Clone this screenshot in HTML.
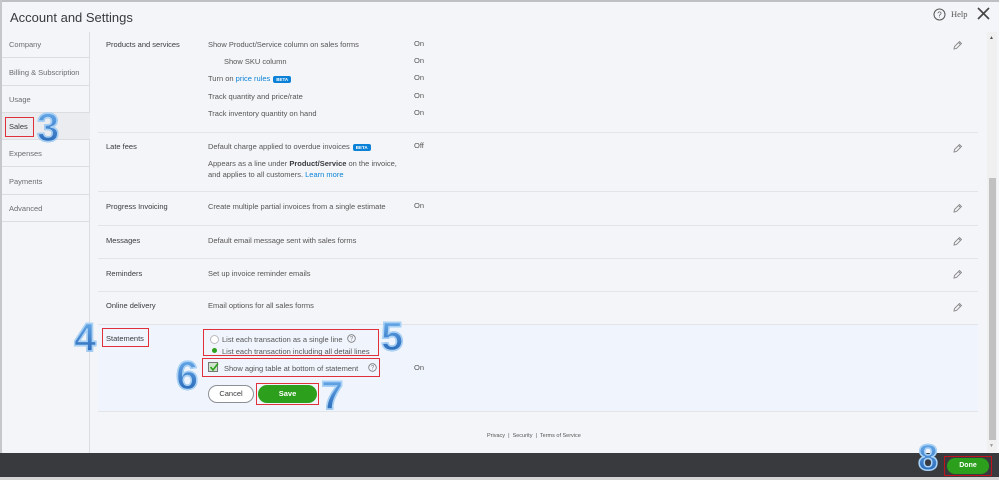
<!DOCTYPE html>
<html><head><meta charset="utf-8"><style>
*{margin:0;padding:0;box-sizing:border-box}
body{width:999px;height:480px;overflow:hidden;background:#f4f5f8;font-family:"Liberation Sans",sans-serif;color:#393a3d;position:relative}
.a{position:absolute;white-space:nowrap}
.s{font-size:7.5px;color:#555}
.lbl{font-size:7.5px;color:#393a3d}
.side{position:absolute;left:2px;width:88px;height:27px;border-bottom:1px solid #dcdde0;font-size:7.5px;color:#6b6c72;padding:9px 0 0 7px}
.sep{position:absolute;left:98px;width:880px;height:1px;background:#e3e4e8}
.beta{display:inline-block;background:#0b82d8;color:#fff;font-size:4.5px;font-weight:bold;padding:1px 3px;border-radius:2px;vertical-align:middle;margin-left:3px}
.link{color:#0b82d8}
.pen{position:absolute;left:952px;width:10px;height:10px}
.red{position:absolute;border:1px solid #e0303a}
.num{position:absolute;font-weight:bold;font-size:40px;color:#3a7fd0;-webkit-text-stroke:1.5px #a9d2f5;font-family:"Liberation Sans",sans-serif;line-height:1;background:linear-gradient(#6fb0ef,#1f5fb0);-webkit-background-clip:text;-webkit-text-fill-color:transparent}
</style></head><body>
<div class="a" style="left:0;top:0;width:999px;height:2px;background:#bfc0c4"></div>
<div class="a" style="left:0;top:0;width:2px;height:453px;background:#c6c7ca"></div>
<div class="a" style="left:10px;top:10px;font-size:13px;color:#393a3d">Account and Settings</div>
<svg class="a" style="left:933px;top:8px" width="13" height="13"><circle cx="6.5" cy="6.5" r="5.5" fill="none" stroke="#555" stroke-width="1"/><text x="6.5" y="9.5" font-size="8" text-anchor="middle" fill="#555" font-family="Liberation Sans">?</text></svg>
<div class="a" style="left:951px;top:9px;font-size:8.5px;color:#555;font-family:'Liberation Serif',serif">Help</div>
<svg class="a" style="left:977px;top:7px" width="13" height="13"><path d="M1 1L12 12M12 1L1 12" stroke="#444" stroke-width="1.6"/></svg>

<div class="a" style="left:89px;top:32px;width:1px;height:421px;background:#dcdde0"></div>
<div class="side" style="top:31px">Company</div>
<div class="side" style="top:59px">Billing &amp; Subscription</div>
<div class="side" style="top:86px">Usage</div>
<div class="side" style="top:113px;background:#ebecef;color:#393a3d">Sales</div>
<div class="side" style="top:140px">Expenses</div>
<div class="side" style="top:168px">Payments</div>
<div class="side" style="top:195px">Advanced</div>
<div class="red" style="left:5px;top:117px;width:29px;height:20px"></div>
<div class="num" style="left:37px;top:108px">3</div>

<div class="a lbl" style="left:106px;top:40px">Products and services</div>
<div class="a s" style="left:208px;top:40px">Show Product/Service column on sales forms</div>
<div class="a s" style="left:224px;top:57px">Show SKU column</div>
<div class="a s" style="left:208px;top:74px">Turn on <span class="link">price rules</span><span class="beta">BETA</span></div>
<div class="a s" style="left:208px;top:92px">Track quantity and price/rate</div>
<div class="a s" style="left:208px;top:109px">Track inventory quantity on hand</div>
<div class="a s" style="left:414px;top:39px">On</div>
<div class="a s" style="left:414px;top:56px">On</div>
<div class="a s" style="left:414px;top:73px">On</div>
<div class="a s" style="left:414px;top:91px">On</div>
<div class="a s" style="left:414px;top:108px">On</div>
<div class="sep" style="top:132px"></div>
<div class="a lbl" style="left:106px;top:142px">Late fees</div>
<div class="a s" style="left:208px;top:142px">Default charge applied to overdue invoices<span class="beta">BETA</span></div>
<div class="a s" style="left:208px;top:159px">Appears as a line under <b style="color:#393a3d">Product/Service</b> on the invoice,</div>
<div class="a s" style="left:208px;top:170px">and applies to all customers. <span class="link">Learn more</span></div>
<div class="a s" style="left:414px;top:141px">Off</div>
<div class="sep" style="top:191px"></div>
<div class="a lbl" style="left:106px;top:202px">Progress Invoicing</div>
<div class="a s" style="left:208px;top:202px">Create multiple partial invoices from a single estimate</div>
<div class="a s" style="left:414px;top:201px">On</div>
<div class="sep" style="top:225px"></div>
<div class="a lbl" style="left:106px;top:236px">Messages</div>
<div class="a s" style="left:208px;top:236px">Default email message sent with sales forms</div>
<div class="sep" style="top:258px"></div>
<div class="a lbl" style="left:106px;top:269px">Reminders</div>
<div class="a s" style="left:208px;top:269px">Set up invoice reminder emails</div>
<div class="sep" style="top:291px"></div>
<div class="a lbl" style="left:106px;top:301px">Online delivery</div>
<div class="a s" style="left:208px;top:301px">Email options for all sales forms</div>
<div class="sep" style="top:324px"></div>

<svg width="0" height="0" style="position:absolute"><defs><g id="p"><path d="M2 9L2.5 6.5L7.5 1.5L9.5 3.5L4.5 8.5Z M6.5 2.5L8.5 4.5" fill="none" stroke="#888" stroke-width="0.9"/></g></defs></svg>
<svg class="pen" style="top:40px"><use href="#p"/></svg>
<svg class="pen" style="top:143px"><use href="#p"/></svg>
<svg class="pen" style="top:203px"><use href="#p"/></svg>
<svg class="pen" style="top:236px"><use href="#p"/></svg>
<svg class="pen" style="top:269px"><use href="#p"/></svg>
<svg class="pen" style="top:302px"><use href="#p"/></svg>

<div class="a" style="left:98px;top:325px;width:880px;height:86px;background:#f0f5fd"></div>
<div class="sep" style="top:411px"></div>
<div class="a lbl" style="left:106px;top:334px">Statements</div>
<div class="red" style="left:102px;top:328px;width:47px;height:19px"></div>
<div class="num" style="left:74px;top:318px">4</div>
<div class="a" style="left:210px;top:335px;width:9px;height:9px;border-radius:50%;background:#fff;border:1px solid #bbb"></div>
<div class="a s" style="left:222px;top:335px">List each transaction as a single line</div>
<svg class="a" style="left:347px;top:334px" width="9" height="9"><circle cx="4.5" cy="4.5" r="3.8" fill="none" stroke="#777" stroke-width=".8"/><text x="4.5" y="6.7" font-size="6" text-anchor="middle" fill="#777">?</text></svg>
<div class="a" style="left:212px;top:348px;width:5px;height:5px;border-radius:50%;background:#2ca01c"></div>
<div class="a s" style="left:222px;top:347px">List each transaction including all detail lines</div>
<div class="red" style="left:203px;top:329px;width:176px;height:27px"></div>
<div class="num" style="left:381px;top:317px">5</div>
<div class="a" style="left:208px;top:362px;width:10px;height:10px;background:#cde6c9;border:1px solid #777"></div>
<svg class="a" style="left:209px;top:362px" width="10" height="10"><path d="M1.5 5L4 8L9 1.5" fill="none" stroke="#2ca01c" stroke-width="1.6"/></svg>
<div class="a s" style="left:224px;top:364px">Show aging table at bottom of statement</div>
<svg class="a" style="left:368px;top:363px" width="9" height="9"><circle cx="4.5" cy="4.5" r="3.8" fill="none" stroke="#777" stroke-width=".8"/><text x="4.5" y="6.7" font-size="6" text-anchor="middle" fill="#777">?</text></svg>
<div class="red" style="left:202px;top:358px;width:178px;height:19px"></div>
<div class="num" style="left:176px;top:356px">6</div>
<div class="a s" style="left:414px;top:363px">On</div>
<div class="a" style="left:208px;top:385px;width:46px;height:18px;border:1px solid #8d9096;border-radius:9px;background:#fff;font-size:7.5px;text-align:center;line-height:16px;color:#393a3d">Cancel</div>
<div class="a" style="left:258px;top:385px;width:59px;height:18px;border-radius:9px;background:#2ca01c;font-size:7.5px;font-weight:bold;text-align:center;line-height:18px;color:#fff">Save</div>
<div class="red" style="left:256px;top:383px;width:63px;height:22px"></div>
<div class="num" style="left:321px;top:376px">7</div>

<div class="a" style="left:487px;top:433px;font-size:5.5px;color:#555">Privacy &nbsp;|&nbsp; Security &nbsp;|&nbsp; Terms of Service</div>

<div class="a" style="left:987px;top:32px;width:10px;height:420px;background:#f0f0f0"></div>
<div class="a" style="left:989px;top:178px;width:7px;height:262px;background:#c1c1c1"></div>
<div class="a" style="left:989px;top:35px;font-size:5px;color:#555">▲</div>
<div class="a" style="left:989px;top:443px;font-size:5px;color:#999">▼</div>

<div class="a" style="left:0;top:453px;width:999px;height:24px;background:#393a3d"></div>
<div class="a" style="left:0;top:477px;width:999px;height:3px;background:#d4d4d4"></div>
<div class="a" style="left:947px;top:458px;width:42px;height:16px;border-radius:8px;background:#2ca01c;font-size:7px;font-weight:bold;text-align:center;line-height:16px;color:#fff">Done</div>
<div class="red" style="left:944px;top:456px;width:48px;height:20px;border-color:#c0141c"></div>
<div class="num" style="left:918px;top:440px;font-size:36px">8</div>
</body></html>
